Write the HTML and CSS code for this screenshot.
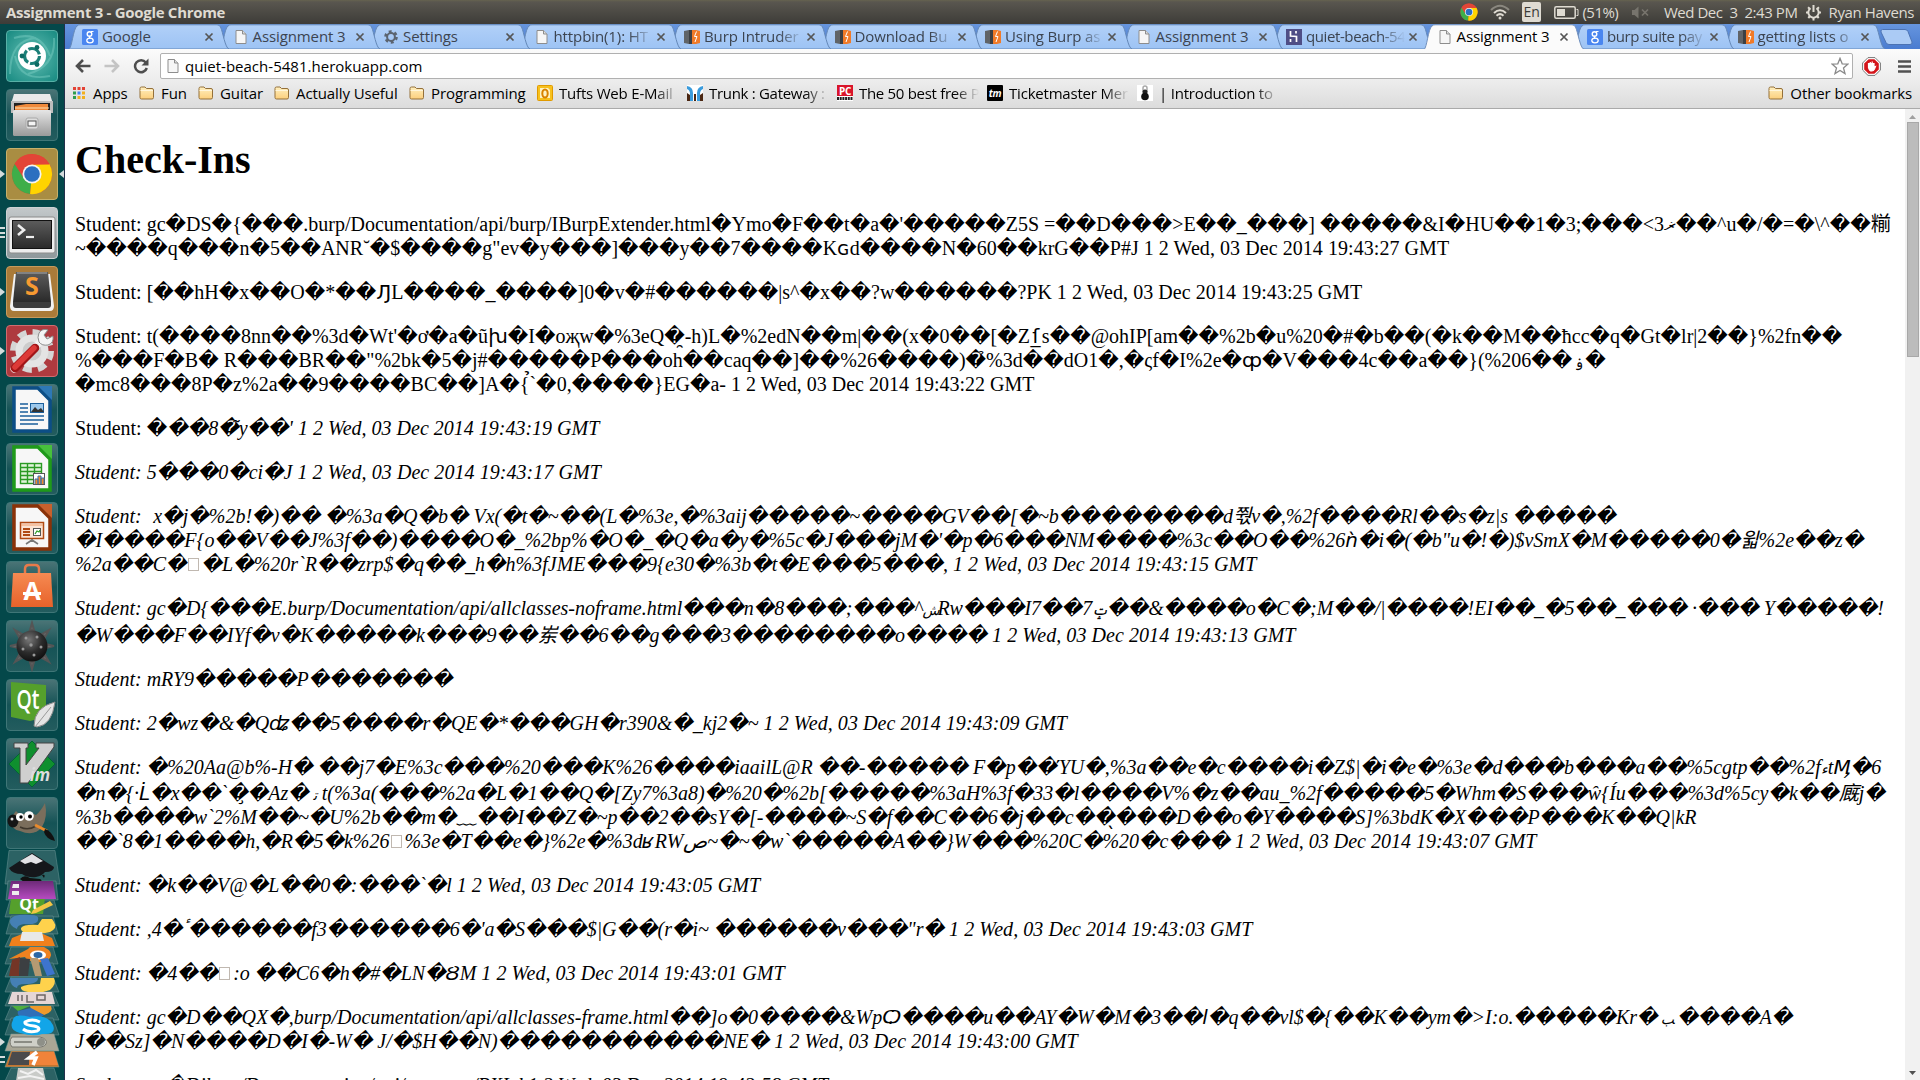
FILE: index.html
```html
<!DOCTYPE html>
<html lang="en">
<head>
<meta charset="utf-8">
<title>Assignment 3</title>
<link rel="stylesheet" href="styles.css">
</head>
<body>
<svg class="defs" width="0" height="0">
  <defs>
    <linearGradient id="gTab" x1="0" y1="0" x2="0" y2="1"><stop offset="0" stop-color="#b1d0f8"/><stop offset="1" stop-color="#9dc3f4"/></linearGradient>
    <linearGradient id="gFolder" x1="0" y1="0" x2="0" y2="1"><stop offset="0" stop-color="#fff0c0"/><stop offset="1" stop-color="#fccf7c"/></linearGradient>
    <linearGradient id="gGrey" x1="0" y1="0" x2="0" y2="1"><stop offset="0" stop-color="#e6e6e6"/><stop offset="1" stop-color="#9a9a9a"/></linearGradient>
    <linearGradient id="gDark" x1="0" y1="0" x2="0" y2="1"><stop offset="0" stop-color="#5c5c5c"/><stop offset="1" stop-color="#2a2a2a"/></linearGradient>
    <linearGradient id="gOrange" x1="0" y1="0" x2="0" y2="1"><stop offset="0" stop-color="#f58a52"/><stop offset="1" stop-color="#e8622a"/></linearGradient>
    <linearGradient id="gPurple" x1="0" y1="0" x2="0" y2="1"><stop offset="0" stop-color="#6d2a78"/><stop offset="1" stop-color="#b64bc0"/></linearGradient>
    <radialGradient id="gBall" cx=".4" cy=".3" r=".7"><stop offset="0" stop-color="#777"/><stop offset=".6" stop-color="#2b2b2b"/><stop offset="1" stop-color="#111"/></radialGradient>
  </defs>
  <symbol id="tab" viewBox="0 0 160 25" preserveAspectRatio="none"><path d="M0 25 C3 24 4 5 8 2 Q9 .8 11 .8 H148 Q150.500 .8 151.500 3 C154 8 156 24 160 25Z" fill="url(#gTab)" stroke="#6488b8"/></symbol>
  <symbol id="tabOn" viewBox="0 0 160 25" preserveAspectRatio="none"><path d="M0 25.500 C3 24 4 5 8 2 Q9 .8 11 .8 H148 Q150.500 .8 151.500 3 C154 8 156 24 160 25.500Z" fill="#fbfbfb" stroke="#6f8fbd"/></symbol>
  <symbol id="x" viewBox="0 0 10 10"><path d="M1.500 1.500 8.500 8.500M8.500 1.500 1.500 8.500" stroke="#555" stroke-width="1.700"/></symbol>
  <symbol id="doc" viewBox="0 0 16 16"><path d="M3 1.500H9.500L13 5V14.500H3Z" fill="#f6f6f6" stroke="#8d8d8d"/><path d="M9.500 1.500V5H13" fill="#ddd" stroke="#8d8d8d"/></symbol>
  <symbol id="goog" viewBox="0 0 16 16"><rect width="16" height="16" rx="1.500" fill="#4a86f0"/><circle cx="7.500" cy="5" r="2.300" fill="none" stroke="#fff" stroke-width="1.400"/><ellipse cx="8" cy="11.500" rx="3.200" ry="2.300" fill="none" stroke="#fff" stroke-width="1.300"/><path d="M9 2.500H11.500M8 7Q6.500 8.500 8.500 9.500" fill="none" stroke="#fff" stroke-width="1.200"/></symbol>
  <symbol id="burp" viewBox="0 0 16 16"><path d="M0 2 5 1V15L0 14Z" fill="#606468"/><path d="M5 1H8V15H5Z" fill="#3c4044"/><path d="M8 1H12L16 2V14L12 15H8Z" fill="#f07a28"/><path d="M12.500 2.500 10.500 7.500H13L11 13" fill="none" stroke="#fff" stroke-width="1"/></symbol>
  <symbol id="folder" viewBox="0 0 16 16"><path d="M1 3.500Q1 2 2.500 2H6L7.500 3.500H13Q14.500 3.500 14.500 5V12.500Q14.500 14 13 14H2.500Q1 14 1 12.500Z" fill="url(#gFolder)" stroke="#94703a"/><path d="M1.500 5.500H14" stroke="#fff6dc"/></symbol>
  <symbol id="heroku" viewBox="0 0 16 16"><rect width="16" height="16" fill="#4f4e86"/><path d="M4.500 2V7L10.500 7.500V13M10 2V4.500M4.500 10V13" fill="none" stroke="#fff" stroke-width="1.700"/></symbol>
  <symbol id="gear" viewBox="0 0 16 16"><circle cx="8" cy="8" r="5.200" fill="none" stroke="#5b6470" stroke-width="3.200" stroke-dasharray="2.720 2.720"/><circle cx="8" cy="8" r="3.900" fill="none" stroke="#5b6470" stroke-width="2"/></symbol>
  <symbol id="chrome" viewBox="0 0 44 44"><circle cx="22" cy="22" r="21" fill="#e8402f"/><path d="M22 22 3.800 11.500A21 21 0 0 0 20 43Z" fill="#3fae49"/><path d="M22 22 20 43A21 21 0 0 0 40.200 11.500L22 12Z" fill="#ffd400"/><path d="M3.800 11.500 13 26 22 12H40.200A21 21 0 0 0 3.800 11.500Z" fill="#e34537"/><circle cx="22" cy="22" r="10" fill="#f4f4f4"/><circle cx="22" cy="22" r="8.200" fill="#2c6fc0"/></symbol>
</svg>

<header class="panel">
  <span class="panel-title">Assignment 3 - Google Chrome</span>
  <div class="tray">
    <svg class="t-chrome" width="18" height="18"><use href="#chrome"/></svg>
    <svg class="t-wifi" width="20" height="16" viewBox="0 0 20 16" fill="none" stroke-width="2"><path d="M1 6Q10-2.500 19 6" stroke="#8a877f"/><path d="M4 9Q10 3.500 16 9" stroke="#dfdbd2"/><path d="M6.500 11.700Q10 8.500 13.500 11.700" stroke="#dfdbd2"/><circle cx="10" cy="14" r="1.500" fill="#dfdbd2"/></svg>
    <span class="lang">En</span>
    <svg class="t-batt" width="25" height="13" viewBox="0 0 25 13"><rect x=".8" y=".8" width="20.400" height="11.400" rx="1.500" fill="none" stroke="#dfdbd2" stroke-width="1.500"/><rect x="3" y="3" width="8" height="7" fill="#dfdbd2"/><path d="M22.500 3.500H24V9.500H22.500" fill="none" stroke="#dfdbd2"/></svg>
    <span class="pct">(51%)</span>
    <svg class="t-mute" width="19" height="13" viewBox="0 0 19 13"><path d="M1 4H3.500L7.500 .5V12.500L3.500 9H1Z" fill="#77746d"/><path d="M11 3.500 17 9.500M17 3.500 11 9.500" stroke="#77746d" stroke-width="1.700"/></svg>
    <span class="clock">Wed Dec&nbsp; 3&nbsp; 2:43 PM</span>
    <svg class="t-gear" width="17" height="17" viewBox="0 0 17 17"><path d="M5.500 4.200A5.200 5.200 0 1 0 11.500 4.200" fill="none" stroke="#dfdbd2" stroke-width="2"/><path d="M8.500 1V8M1 8.500H4M13 8.500H16M3 3.300 5 5M14 3.300 12 5M3.300 14 5 12M13.700 14 12 12M8.500 13V16.500" stroke="#dfdbd2" stroke-width="2"/></svg>
    <span class="user">Ryan Havens</span>
  </div>
</header>

<div class="desktop">
  <nav class="launcher">
    <div class="tile dash">
      <svg viewBox="0 0 52 52"><g fill="none" stroke="#7fd0c6" stroke-width="2" opacity=".45"><path d="M4 44Q4 10 30 8M48 8Q50 36 22 44M8 8Q34 0 44 26M44 46Q14 52 9 26"/></g><circle cx="26" cy="26" r="14" fill="#fff"/><circle cx="26" cy="26" r="7.500" fill="none" stroke="#1b7f78" stroke-width="3.200" stroke-dasharray="13.700 2"/><g fill="#0d6b64"><circle cx="16" cy="26" r="2.400"/><circle cx="31" cy="17.500" r="2.400"/><circle cx="31" cy="34.500" r="2.400"/></g></svg>
    </div>
    <div class="tile">
      <svg viewBox="0 0 52 52"><path d="M8 5H44L47 15H5Z" fill="#e9e9e9"/><rect x="5" y="12" width="42" height="12" fill="#bdbdbd"/><rect x="8" y="14" width="36" height="8" fill="#222"/><path d="M9 17 20 15H42V23H9Z" fill="#ef8a3c"/><path d="M9 19H43" stroke="#ffe0b0"/><rect x="7" y="21" width="38" height="26" rx="1.500" fill="url(#gGrey)"/><rect x="20" y="29" width="12" height="11" rx="2" fill="#ddd" stroke="#aaa"/><rect x="22" y="32" width="8" height="5" fill="#f4f4f4" stroke="#555"/></svg>
    </div>
    <div class="tile gold run focus"><svg viewBox="0 0 52 52"><use href="#chrome" x="5" y="5" width="42" height="42"/></svg></div>
    <div class="tile silver run three">
      <svg viewBox="0 0 52 52"><rect x="3" y="10" width="46" height="36" rx="2" fill="#ededed" stroke="#8b8b8b"/><rect x="6.500" y="13.500" width="39" height="28" fill="url(#gDark)" stroke="#111"/><path d="M12 18 18 23 12 28" fill="none" stroke="#eee" stroke-width="2.600"/><path d="M20 30H28" stroke="#eee" stroke-width="2.200"/></svg>
    </div>
    <div class="tile bronze run">
      <svg viewBox="0 0 52 52"><path d="M8 8H44L48 40Q48 45 44 45H8Q4 45 4 40Z" fill="#f2f2f2"/><path d="M10 6H42L45 36H7Z" fill="url(#gDark)"/><path d="M7 36H45V39Q45 42 42 42H10Q7 42 7 39Z" fill="#3c3c3c"/><path d="M11 7H41" stroke="#aaa"/><text x="26" y="29" text-anchor="middle" class="ic sub">S</text></svg>
    </div>
    <div class="tile red run">
      <svg viewBox="0 0 52 52"><circle cx="26" cy="26" r="18.500" fill="none" stroke="#d5d5d5" stroke-width="7" stroke-dasharray="8.500 6.030"/><circle cx="26" cy="26" r="13" fill="#ccc" stroke="#e4e4e4" stroke-width="7"/><path d="M8 44 36 15" stroke="#f1f1f1" stroke-width="7" stroke-linecap="round"/><path d="M33 8Q36 3 42 5L38 10 41 14 47 11Q48 18 42 20 36 21 33 17 31 12 33 8Z" fill="#f4f4f4" stroke="#8d8d8d"/><path d="M9 43 29 23" stroke="#a01517" stroke-width="8.500" stroke-linecap="round"/><path d="M9 42 28 23" stroke="#dc3a38" stroke-width="5.500" stroke-linecap="round"/></svg>
    </div>
    <div class="tile">
      <svg viewBox="0 0 52 52"><path d="M8 4H32L44 16V47H8Z" fill="#f7f7f7" stroke="#0c4e86" stroke-width="3.500"/><path d="M32 2H46V16Z" fill="#2d78b5"/><path d="M14 20H22M14 24H22M14 28H22M14 32H38M14 36H38M14 40H32" stroke="#1b5f9c" stroke-width="1.700"/><rect x="24.500" y="19.500" width="13" height="9" fill="#9cc8ec" stroke="#1b5f9c"/><path d="M25 28 29 23 32 26 35 24 38 28Z" fill="#333"/></svg>
    </div>
    <div class="tile">
      <svg viewBox="0 0 52 52"><path d="M8 4H32L44 16V47H8Z" fill="#f7f7f7" stroke="#1f9a1a" stroke-width="3.500"/><path d="M32 2H46V16Z" fill="#47c03c"/><g fill="none" stroke="#2a9a23" stroke-width="1.400"><rect x="14.500" y="20.500" width="21" height="20" fill="#dff3d8"/><path d="M14 24.500H36M14 28.500H36M14 32.500H36M14 36.500H36M21.500 20V40M28.500 20V40"/></g><rect x="27.500" y="30.500" width="11" height="11" fill="#fff" stroke="#555"/><path d="M29 41V36H32V41M32 41V33H35V41M35 41V35H38V41" fill="#f08a2a" stroke="#3a72b0"/></svg>
    </div>
    <div class="tile">
      <svg viewBox="0 0 52 52"><path d="M8 4H32L44 16V47H8Z" fill="#f7f7f7" stroke="#8a3208" stroke-width="3.500"/><path d="M32 2H46V16Z" fill="#c8602c"/><rect x="14.500" y="20.500" width="23" height="16" fill="#fbe4d4" stroke="#b04a14" stroke-width="1.500"/><path d="M17 27H24M17 30H24M17 33H24" stroke="#b04a14" stroke-width="1.800"/><path d="M15 23H37" stroke="#f0a070"/><rect x="27.500" y="26.500" width="7" height="7" fill="#fff" stroke="#555"/><path d="M29 32 31 29 33 30 34 28" fill="none" stroke="#2a9a23" stroke-width="1.200"/><path d="M26 37V38L20 42M26 38 32 42" stroke="#777" stroke-width="1.600" fill="none"/></svg>
    </div>
    <div class="tile">
      <svg viewBox="0 0 52 52"><path d="M19 14V8Q19 4 23 4H29Q33 4 33 8V14" fill="none" stroke="#e87a4a" stroke-width="2.500"/><path d="M7 12H45L47 46H5Z" fill="url(#gOrange)"/><text x="26" y="39" text-anchor="middle" class="ic usc">A</text><rect x="17" y="31" width="18" height="3" fill="#fff"/></svg>
    </div>
    <div class="tile">
      <svg viewBox="0 0 52 52"><path d="M26 3 28 10H24ZM26 49 24 42H28ZM4 26 12 24V28ZM48 26 40 24V28ZM9 10 16 14 13 17ZM43 10 36 14 39 17ZM9 42 16 38 13 35ZM43 42 36 38 39 35Z" fill="#666" stroke="#555" stroke-width="2"/><circle cx="26" cy="26" r="15.500" fill="url(#gBall)"/><g fill="#999"><circle cx="20" cy="18" r="1.500"/><circle cx="31" cy="17" r="1.500"/><circle cx="25" cy="25" r="1.700"/><circle cx="35" cy="27" r="1.500"/><circle cx="17" cy="29" r="1.500"/><circle cx="28" cy="35" r="1.500"/></g></svg>
    </div>
    <div class="tile">
      <svg viewBox="0 0 52 52"><path d="M5 3 40 6V38L24 42 5 38Z" fill="#55a02c"/><text x="22" y="30" text-anchor="middle" class="ic qt" textLength="23" lengthAdjust="spacingAndGlyphs">Qt</text><path d="M49 23Q28 28 28 47L31 48Q46 46 49 23Z" fill="#e4e4e4" stroke="#888"/><path d="M29 48 45 28" stroke="#999"/></svg>
    </div>
    <div class="tile">
      <svg viewBox="0 0 52 52"><path d="M26 3 49 26 26 49 3 26Z" fill="#0f8f2e" stroke="#063"/><path d="M8 5H22V10H20V27L33 10H30V5H48V9L22 45H14V10H8Z" fill="#cfcfcf" stroke="#444"/><text x="34" y="43" text-anchor="middle" class="ic vim">im</text></svg>
    </div>
    <div class="tile">
      <svg viewBox="0 0 52 52"><path d="M10 14 14 18Q24 14 30 18 35 14 39 6 42 20 36 30 28 40 14 34 4 32 4 22Z" fill="#7b6e5c"/><ellipse cx="7" cy="24" rx="5.500" ry="6.500" fill="#151515"/><circle cx="6" cy="22" r="1.500" fill="#ddd"/><circle cx="14" cy="20" r="4" fill="#fff"/><circle cx="23" cy="19" r="4.800" fill="#fff"/><circle cx="15" cy="20" r="1.700"/><circle cx="24" cy="19.500" r="2"/><path d="M14 30Q22 34 30 29" fill="none" stroke="#3f372c" stroke-width="1.500"/><path d="M29 28 41 34" stroke="#e98a2c" stroke-width="3"/><path d="M39 32Q46 34 49 44 40 42 38 35Z" fill="#111"/></svg>
    </div>
    <svg class="stack" viewBox="0 0 64 231" width="64" height="231">
      <g fill="#2c6264" stroke="#6f999a" stroke-opacity=".5">
        <path d="M9 .5H55L60 34H5Z"/><path d="M8 31H56L58 50H6Z"/><path d="M10 50H54L59 67H5Z"/><path d="M11 66H53L58 84H6Z"/><path d="M11 84H53L58 97H5Z"/><path d="M11 97H53L58 114H5Z"/><path d="M11 113H53L59 127H5Z"/><path d="M11 127H53L59 142H5Z"/><path d="M11 142H53L59 156H5Z"/><path d="M11 156H53L59 170H5Z"/><path d="M11 168H53L59 185H5Z"/><path d="M11 184H54L59 201H5Z" fill="#a9a695"/><path d="M11 201H54L59 217H5Z" fill="#c5762f"/><path d="M11 218H54L58 231H5Z"/>
      </g>
      <path d="M32 3 54 17Q54 22 45 22 42 26 36 27 28 28 22 24 12 24 9 18Z" fill="#15171b"/><path d="M32 4 43 11 36 14 31 12 25 14 20 11Z" fill="#e2e2e6"/><path d="M20 29Q24 24 30 28L40 29Q44 31 38 32H24ZM42 25Q46 24 44 28" fill="#111"/>
      <path d="M11 48H45L43 64H9Z" fill="#55a02c"/><text x="29" y="60" text-anchor="middle" class="ic qts">Qt</text><path d="M33 60 50 51 53 55 36 63 31 64Z" fill="#f3c544"/>
      <path d="M11 31H53L56 49H8Z" fill="url(#gPurple)"/><path d="M13 34H19V38H12ZM12 41H19V45H12Z" fill="#eee"/>
      <path d="M10 70Q12 64 30 65 40 65 38 70 38 75 24 74 17 75 17 79 9 76 10 70Z" fill="#4580b4"/><path d="M54 72Q58 78 50 82 44 84 30 83 20 83 21 78 24 74 38 75L42 69H52Z" fill="#ffd24c"/>
      <path d="M22 84H43L52 88 55 96H9L12 88Z" fill="#f0801c"/><path d="M22 82H42L44 91H20Z" fill="#e8e8e8"/>
      <path d="M9 109 28 99 30 97H44Q54 102 50 108 46 113 34 112 26 110 25 107Z" fill="#ee8220"/><ellipse cx="38" cy="105" rx="8" ry="4.500" fill="#fff"/><ellipse cx="38" cy="105" rx="4.500" ry="3" fill="#2b67a5"/>
      <path d="M12 110 20 107 19 126H9Z" fill="#743526"/><path d="M20 108 30 109 28 126H19Z" fill="#3c3f42"/><path d="M30 108 38 108 42 126H35Z" fill="#b59a72"/><path d="M40 109 48 108 55 124 47 126Z" fill="#3d74cd"/>
      <path d="M10 128H38Q38 134 25 134 17 134 17 138 10 136 10 128Z" fill="#4580b4"/><path d="M41 128H54Q57 134 50 140 40 144 28 142 20 141 21 137 26 134 40 134Z" fill="#ffd24c"/>
      <path d="M12 142H52L55 154H8Z" fill="#e5d6d6"/><path d="M18 145V151M22 145V151M27 145V152H34M37 145H45V150H37Z" stroke="#6e6666" stroke-width="1.500" fill="none"/>
      <path d="M12 156H30L18 161Z" fill="#4fae3f"/><path d="M30 156H51Q54 162 44 165L31 159Z" fill="#ef9a2b"/><path d="M18 161 31 158 44 165Q38 170 27 170 16 167 18 161Z" fill="#2f6fb8"/>
      <path d="M13 170Q14 163 30 167 48 164 53 175 57 185 42 184 34 187 20 183 8 180 13 170Z" fill="#12a5e8"/><path d="M40 172Q32 168 25 172 24 175 34 176 42 178 37 181 28 183 23 179" fill="none" stroke="#fff" stroke-width="3"/>
      <path d="M12 187H40Q48 189 46 194 44 198 34 197H12Q8 192 12 187Z" fill="#cfd0c8" stroke="#77776f"/><circle cx="41" cy="192" r="4" fill="#8e9088"/><path d="M14 192H32" stroke="#8b8c84" stroke-width="2"/>
      <path d="M12 202H30L29 215H8Z" fill="#4a4a4c"/><path d="M30 202H54L58 215H29Z" fill="#f0833a"/><path d="M37 202 29 208H36L33 215" fill="none" stroke="#fff" stroke-width="3.500"/>
      <path d="M18 218H43L46 231H16Z" fill="#c9cbc8"/><path d="M20 221 28 224 36 220 43 225M18 228 30 226 44 229" stroke="#f2f2f2" stroke-width="2" fill="none"/>
      <path d="M0 188 5 192 0 196ZM0 206H5V208H0ZM0 211H5V213H0Z" fill="#d4dcdc"/>
    </svg>
  </nav>

  <main class="browser">
    <div class="tabs">
      <div class="tab"><svg class="shape"><use href="#tab"/></svg><svg class="fav"><use href="#goog"/></svg><span>Google</span><svg class="close"><use href="#x"/></svg></div>
      <div class="tab"><svg class="shape"><use href="#tab"/></svg><svg class="fav"><use href="#doc"/></svg><span>Assignment 3</span><svg class="close"><use href="#x"/></svg></div>
      <div class="tab"><svg class="shape"><use href="#tab"/></svg><svg class="fav"><use href="#gear"/></svg><span>Settings</span><svg class="close"><use href="#x"/></svg></div>
      <div class="tab"><svg class="shape"><use href="#tab"/></svg><svg class="fav"><use href="#doc"/></svg><span class="fade">httpbin(1): HT</span><svg class="close"><use href="#x"/></svg></div>
      <div class="tab"><svg class="shape"><use href="#tab"/></svg><svg class="fav"><use href="#burp"/></svg><span class="fade">Burp Intruder</span><svg class="close"><use href="#x"/></svg></div>
      <div class="tab"><svg class="shape"><use href="#tab"/></svg><svg class="fav"><use href="#burp"/></svg><span class="fade">Download Bu</span><svg class="close"><use href="#x"/></svg></div>
      <div class="tab"><svg class="shape"><use href="#tab"/></svg><svg class="fav"><use href="#burp"/></svg><span class="fade">Using Burp as</span><svg class="close"><use href="#x"/></svg></div>
      <div class="tab"><svg class="shape"><use href="#tab"/></svg><svg class="fav"><use href="#doc"/></svg><span>Assignment 3</span><svg class="close"><use href="#x"/></svg></div>
      <div class="tab"><svg class="shape"><use href="#tab"/></svg><svg class="fav"><use href="#heroku"/></svg><span class="fade tight">quiet-beach-54</span><svg class="close"><use href="#x"/></svg></div>
      <div class="tab active"><svg class="shape"><use href="#tabOn"/></svg><svg class="fav"><use href="#doc"/></svg><span>Assignment 3</span><svg class="close"><use href="#x"/></svg></div>
      <div class="tab"><svg class="shape"><use href="#tab"/></svg><svg class="fav"><use href="#goog"/></svg><span class="fade tight">burp suite pay</span><svg class="close"><use href="#x"/></svg></div>
      <div class="tab"><svg class="shape"><use href="#tab"/></svg><svg class="fav"><use href="#burp"/></svg><span class="fade">getting lists o</span><svg class="close"><use href="#x"/></svg></div>
      <svg class="newtab" width="33" height="16" viewBox="0 0 33 16"><path d="M2.500 .5H25Q27 .5 28 2.500L32 13Q32.500 15.500 30 15.500H9Q7 15.500 6 13.500L1 3Q.5 .5 2.500 .5Z" fill="#abcbf5" stroke="#4c73b3"/></svg>
    </div>

    <div class="toolbar">
      <svg class="nav" width="16" height="14" viewBox="0 0 16 14"><path d="M8 1 2 7 8 13M2 7H15.500" fill="none" stroke="#4e4e4e" stroke-width="2.600"/></svg>
      <svg class="nav" width="16" height="14" viewBox="0 0 16 14"><path d="M8 1 14 7 8 13M14 7H.5" fill="none" stroke="#c4c4c4" stroke-width="2.600"/></svg>
      <svg class="nav" width="16" height="16" viewBox="0 0 16 16"><path d="M12.800 4.500A6 6 0 1 0 13.800 10" fill="none" stroke="#4e4e4e" stroke-width="2.500"/><path d="M15.500 .5V7.500H8.500Z" fill="#4e4e4e"/></svg>
      <div class="omnibox"><svg width="16" height="16"><use href="#doc"/></svg><span>quiet-beach-5481.herokuapp.com</span>
        <svg class="star" width="18" height="18" viewBox="0 0 18 18"><path d="M9 1.300 11.200 6.800 17 7.100 12.500 10.900 14 16.600 9 13.400 4 16.600 5.500 10.900 1 7.100 6.800 6.800Z" fill="#fff" stroke="#8a8a8a" stroke-width="1.300"/></svg></div>
      <svg class="abp" width="19" height="19" viewBox="0 0 19 19"><path d="M6 .6H13L18.400 6V13L13 18.400H6L.6 13V6Z" fill="#fff" stroke="#777"/><path d="M6.600 2.200H12.400L16.800 6.600V12.400L12.400 16.800H6.600L2.200 12.400V6.600Z" fill="#d4141a"/><path d="M6.500 6V10.500Q7.500 14 9.700 14 11.500 14 12.500 12L13.500 9.500 12 10V6M8.300 9V5M10.200 9V4.500" stroke="#fff" stroke-width="1.200" fill="#fff"/></svg>
      <svg class="menu" width="13" height="13" viewBox="0 0 13 13"><path d="M0 1.500H13M0 6.500H13M0 11.500H13" stroke="#515151" stroke-width="2.600"/></svg>
    </div>

    <div class="bookmarks">
      <a class="b1"><svg viewBox="0 0 16 16"><path d="M2 2H5V5H2ZM6.500 2H9.500V5H6.500ZM11 2H14V5H11Z" fill="#e34234"/><path d="M2 6.500H5V9.500H2Z" fill="#2e9e4f"/><path d="M6.500 6.500H9.500V9.500H6.500Z" fill="#4285f4"/><path d="M11 6.500H14V9.500H11Z" fill="#f2b01e"/><path d="M2 11H5V14H2Z" fill="#2e9e4f"/><path d="M6.500 11H9.500V14H6.500ZM11 11H14V14H11Z" fill="#f2b01e"/></svg><span>Apps</span></a>
      <a class="b2"><svg><use href="#folder"/></svg><span>Fun</span></a>
      <a class="b3"><svg><use href="#folder"/></svg><span>Guitar</span></a>
      <a class="b4"><svg><use href="#folder"/></svg><span>Actually Useful</span></a>
      <a class="b5"><svg><use href="#folder"/></svg><span>Programming</span></a>
      <a class="b6"><svg viewBox="0 0 16 16"><rect x=".5" y=".5" width="15" height="15" rx="1" fill="#f7c11e" stroke="#e09a00"/><path d="M3 3H11L13 5V13H3Z" fill="#fff3c4"/><ellipse cx="8" cy="8.500" rx="2.700" ry="4" fill="none" stroke="#d98200" stroke-width="2"/></svg><span class="fade">Tufts Web E-Mail</span></a>
      <a class="b7"><svg viewBox="0 0 16 16"><rect width="16" height="16" fill="#fff"/><path d="M0 1Q6 2 6 8V16H3V9Q3 5 0 4ZM16 1Q10 2 10 8V16H13V9Q13 5 16 4Z" fill="#3a9bdc"/><path d="M0 8 3 10V16H0ZM16 8 13 10V16H16ZM7 9H9V16H7Z" fill="#4b2713"/></svg><span class="fade">Trunk : Gateway :</span></a>
      <a class="b8"><svg viewBox="0 0 16 16"><rect width="16" height="16" fill="#fff"/><rect width="16" height="11" fill="#d9142a"/><text x="8" y="9.500" text-anchor="middle" class="ic pc">PC</text><path d="M0 13.500H16" stroke="#222" stroke-width="3" stroke-dasharray="2 .7"/></svg><span class="fade">The 50 best free P</span></a>
      <a class="b9"><svg viewBox="0 0 16 16"><rect width="16" height="16" rx="1" fill="#000"/><text x="8" y="12" text-anchor="middle" class="ic tm">tm</text></svg><span class="fade">Ticketmaster Mer</span></a>
      <a class="b10"><svg viewBox="0 0 16 16"><rect width="16" height="16" fill="#fff"/><path d="M6 7V3Q6 1 8 1 10 1 10 3V7" fill="none" stroke="#aaa" stroke-width="1.500"/><circle cx="8" cy="7" r="2.500" fill="#222"/><circle cx="8" cy="11.500" r="3.800" fill="#111"/></svg><span class="fade">| Introduction to</span></a>
      <a class="other"><svg><use href="#folder"/></svg><span>Other bookmarks</span></a>
    </div>

    <div class="viewport">
      <article class="page">
        <h1>Check-Ins</h1>
        <p><span>Student: gc�DS�{���.burp/Documentation/api/burp/IBurpExtender.html�Ymo�F��t�a�'�����Z5S =��D���&gt;E��_���] �����&amp;I�HU��1�3;���&lt;3ޜ��^u�/�=�\^��糋</span>
          <span>~����q���n�5��ANR˘�$����g"ev�y���]���y��7����K<b class="dv">ɢ</b>d����N�60��krG��P#J <time class="wide">1 2 Wed, 03 Dec 2014 19:43:27 GMT</time></span></p>
        <p><span>Student: [��hH�x��O�*��<b class="dv">Ԓ</b>L����_����]0�v�#������|s^�x��?w������?PK <time>1 2 Wed, 03 Dec 2014 19:43:25 GMT</time></span></p>
        <p><span>Student: t(����8nn��%3d�Wt'�ơ�a�ũ<b class="dv">խ</b>�I�oҗw�%3eQ�̯-h)L�%2edN��m|��(x�0��[�Z<b class="dv w12">ſ̲</b>s��@ohIP[am��%2b�u%20�#�b��(�k��M��ħcc�q�Gt�lr|2��}%2fn��</span>
          <span>%���F�B� R���BR��"%2bk�5�j#�����P���oh��caq��]��%26����)�̉%3d��dO1�,�ςf�I%2e�<b class="dv">ȹ</b>�V���4c��a��}(%206��<b class="ar w13">ۏ</b>�</span>
          <span>�mc8���8P�z%2a��9����BC��]A�{̉`�0,����}EG�a- 1 2 Wed, 03 Dec 2014 19:43:22 GMT</span></p>
        <p><span>Student: �<i>��8�̃y��' 1 2 Wed, 03 Dec 2014 19:43:19 GMT</i></span></p>
        <div class="it">
        <p><span>Student: 5���0�ci�J <time>1 2 Wed, 03 Dec 2014 19:43:17 GMT</time></span></p>
        <p><span>Student: <b class="low">ˏ</b>x�j�%2b!�)�� �%3a�Q�b� Vx(�t�~��(L�%3e,�%3aij�����~����GV��[�~b��������d쭧v�,%2f����Rl��s�z|s �����</span>
          <span>�I����F{o��V��J%3f��)����O�_%2bp%�O�_�Q�a�y�%5c�J���jM�'�p�6���NM����%3c��O��%26<b class="dv">ǹ</b>�i�(�b"u�!�)$vSmX�M�����0�윏%2e��z�</span>
          <span>%2a��C�<b class="tofu"></b>�L�%20r`R��zrp$�q��_h�h%3fJME���9{e30�%3b�t�E���5���, <time>1 2 Wed, 03 Dec 2014 19:43:15 GMT</time></span></p>
        <p><span>Student: gc�D{���E.burp/Documentation/api/allclasses-noframe.html���n�8���;���^<b class="ar w15">ش</b>Rw���I7��7<b class="ar w15">ݓ</b>��&amp;����o�C�;M��/|����!EI��_�5��_��� ·��� Y�����!</span>
          <span class="tall3">�W���F��IYf�v�K�����k���9��岽��6��g���3��������o���� <time>1 2 Wed, 03 Dec 2014 19:43:13 GMT</time></span></p>
        <p><span>Student: mRY9�����P�������</span></p>
        <p><span>Student: 2�wz�&amp;�Q<b class="dv">ʥ</b>��5����r�QE�*���GH�r390&amp;�_kj2�~ <time>1 2 Wed, 03 Dec 2014 19:43:09 GMT</time></span></p>
        <p><span>Student: �%20Aa@b%-H� ��j7�E%3c���%20���K%26����iaailL@R ��-����� F�p��ΎU�,%3a��e�c����i�Z$|�i�e�%3e�d���b���a��%5cgtp��%2f<b class="ar w7">ء</b>t<b class="dv">Ӎ</b>�6</span>
          <span class="tall2">�n�{·<b class="dv">L̇</b>�x��`�̧�Az�<b class="ar w13">ﺗ</b>t(%3a(���%2a�L�1��Q�[Zy7%3a8)�%20�%2b[�����%3aH%3f�33�l����V%�z��au_%2f�����5�Whm�S���ŵ{Íu���%3d%5cy�k��廐j�</span>
          <span>%3b����w`2%M��~�U%2b��m�﹏��I��Z�~p��2��sY�[-����~S�f��C��6�j��c��̖���D��o�Y����S]%3bdK�X���P���K��Q|kR</span>
          <span>��`8�1����h,�R�5�k%26<b class="tofu"></b>%3e�T��e�}%2e�%3d<b class="dv">ʁ</b>RWص~�~�w`�����A��}W���%20C�%20�c��� 1 2 Wed, 03 Dec 2014 19:43:07 GMT</span></p>
        <p><span>Student: �k��V@�L��0�:���`�l <time>1 2 Wed, 03 Dec 2014 19:43:05 GMT</time></span></p>
        <p><span>Student: ,4�ٴ������f3������6�'a�S���$|G��(r�i~ ������v���"r� <time>1 2 Wed, 03 Dec 2014 19:43:03 GMT</time></span></p>
        <p><span>Student: �4��<b class="tofu"></b>:o ��C6�h�#�LN�<b class="dv">Ȣ</b>M <time>1 2 Wed, 03 Dec 2014 19:43:01 GMT</time></span></p>
        <p><span>Student: gc�D��QX�,burp/Documentation/api/allclasses-frame.html��]o�0����&amp;Wp<b class="dv w19">Ѻ</b>����u��AY�W�M�3��<b class="dv">ӏ</b>�q��vl$�{��K��ym�&gt;I:o.�����Kr�<b class="ar w20">ﺐ</b>����A�</span>
          <span>J��Sz]�N����D�I�-W� J/�$H��N)�����������NE� <time>1 2 Wed, 03 Dec 2014 19:43:00 GMT</time></span></p>
        <p class="last"><span>Student: gc�Dibmp/Documentation/api/compact/BXIel 1 2 Wed, 03 Dec 2014 19:42:58 GMT</span></p>
        </div>
      </article>
      <div class="scrollbar">
        <svg width="15" height="13" viewBox="0 0 15 13"><path d="M4 10 7.500 6 11 10Z" fill="#a0a0a0"/></svg>
        <div class="thumb"></div>
        <svg class="down" width="15" height="15" viewBox="0 0 15 15"><path d="M4 6 7.500 10 11 6Z" fill="#505050"/></svg>
      </div>
    </div>
  </main>
</div>
</body>
</html>
```
FILE: styles.css
```css
* { box-sizing: border-box; }
body { margin: 0; width: 1920px; height: 1080px; overflow: hidden; display: flex; flex-direction: column; font-family: "Open Sans", sans-serif; font-size: 15px; color: #000; background: #fff; }
svg { display: block; flex: none; }
.defs { position: absolute; }
.ic { font-family: "Open Sans", sans-serif; font-weight: 700; fill: #fff; }
.sub { font-size: 25px; fill: #f79a31; }
.usc { font-size: 25px; }
.qt { font-size: 27px; font-weight: 600; }
.qts { font-size: 16px; }
.vim { font-size: 17px; font-style: italic; fill: #ddd; }
.pc { font-size: 10px; }
.tm { font-size: 10px; font-style: italic; }

.panel { height: 24px; flex: none; display: flex; justify-content: space-between; align-items: center; padding: 0 6px; background: linear-gradient(#66634f 0, #59564f 2px, #3d3c38 100%); color: #dfdbd2; line-height: 22px; white-space: nowrap; }
.panel-title { font-weight: 700; letter-spacing: -0.3px; }
.panel-title, .pct, .clock, .user { margin-top: -1px; }
.tray { display: flex; align-items: center; width: 454px; }
.t-wifi { margin-left: 12px; }
.lang { width: 20px; height: 20px; margin-left: 12px; border-radius: 2px; background: #dfdbd2; color: #3c3b37; line-height: 20px; text-align: center; font-size: 14px; }
.t-batt { margin-left: 13px; }
.pct { width: 50px; margin-left: 3px; letter-spacing: -0.5px; }
.clock { width: 145px; margin-left: 14px; letter-spacing: -0.45px; }
.user { margin-left: 7px; letter-spacing: -0.4px; }

.desktop { flex: 1; display: flex; min-height: 0; }
.launcher { width: 65px; flex: none; display: flex; flex-direction: column; padding-top: 6px; background: #04484a; border-right: 1px solid #23304a; overflow: hidden; }
.tile { position: relative; flex: none; width: 52px; height: 52px; margin: 0 0 7px 6px; border-radius: 4px; border: 1px solid #3f7677; background: linear-gradient(#4a7476, #155356 50%, #235c5e); }
.tile svg { width: 52px; height: 52px; margin: -1px; }
.tile:nth-child(14) { margin-bottom: 1px; }
.dash { background: radial-gradient(#65bfb4, #178a81); border-color: #58b0a6; }
.gold { background: #a98d42; border-color: #c5b06c; }
.silver { background: linear-gradient(#c3c8ca, #8e989b); border-color: #cdd2d4; }
.bronze { background: #aa7b39; border-color: #c79a5c; }
.red { background: #ae3a3f; border-color: #cf6c70; }
.run::before { content: ""; position: absolute; left: -7px; top: 21px; border: 4.500px solid transparent; border-left: 5px solid #d4dcdc; border-right: 0; }
.three::before { height: 12px; width: 5px; top: 19px; border: 0; background: repeating-linear-gradient(#d4dcdc 0 2px, transparent 2px 4.500px); }
.focus::after { content: ""; position: absolute; right: -7px; top: 21px; border: 4.500px solid transparent; border-right: 5px solid #d4dcdc; border-left: 0; }

.browser { flex: 1; min-width: 0; display: flex; flex-direction: column; }
.tabs { height: 25px; flex: none; display: flex; padding-left: 4px; background: linear-gradient(#6695de, #4a7cd0); color: #3c4450; }
.tab { position: relative; width: 160px; height: 25px; flex: none; margin-right: -9.500px; display: flex; align-items: center; padding-left: 13px; z-index: 1; }
.tab:nth-child(1) { z-index: 12; } .tab:nth-child(2) { z-index: 11; } .tab:nth-child(3) { z-index: 10; } .tab:nth-child(4) { z-index: 9; } .tab:nth-child(5) { z-index: 8; } .tab:nth-child(6) { z-index: 7; } .tab:nth-child(7) { z-index: 6; } .tab:nth-child(8) { z-index: 5; } .tab:nth-child(9) { z-index: 4; } .tab:nth-child(11) { z-index: 3; } .tab:nth-child(12) { z-index: 2; }
.tab.active { z-index: 20; color: #000; }
.shape { position: absolute; left: 0; top: 0; width: 160px; height: 25px; z-index: -1; }
.fav { width: 16px; height: 16px; }
.tab span { width: 101px; margin-left: 4px; margin-top: -1px; white-space: nowrap; letter-spacing: -0.1px; line-height: 22px; }
.tab .tight { letter-spacing: -0.4px; }
.fade { -webkit-mask-image: linear-gradient(90deg, #000 calc(100% - 24px), transparent); mask-image: linear-gradient(90deg, #000 calc(100% - 24px), transparent); }
.tab .fade { width: 99px; margin-right: 2px; }
.close { width: 10px; height: 10px; margin-left: 1px; }
.newtab { margin: 5px 0 0 14px; margin-left: 5px; }

.toolbar { height: 31px; flex: none; display: flex; align-items: center; padding: 4px 9px 1px 10px; background: linear-gradient(#fbfbfb, #ededed); }
.nav { margin-right: 13px; }
.omnibox { flex: 1; height: 26px; margin-left: -2px; display: flex; align-items: center; padding: 0 3px 0 4px; border: 1px solid #b0b0b0; border-radius: 2px; background: #fff; }
.omnibox span { flex: 1; margin-left: 4px; line-height: 24px; letter-spacing: 0.02px; }
.abp { margin-left: 9px; }
.menu { margin-left: 17px; }

.bookmarks { position: relative; height: 29px; flex: none; display: flex; align-items: center; padding: 0 8px 2px 6px; border-bottom: 1px solid #aaa; background: linear-gradient(#ededed, #dcdcdc); letter-spacing: -0.1px; }
.bookmarks a { display: flex; align-items: center; flex: none; white-space: nowrap; line-height: 26px; }
.bookmarks svg { width: 16px; height: 16px; margin-right: 6px; }
.bookmarks .fade { width: 120px; }
.b1 { width: 68px; } .b2 { width: 59px; } .b3 { width: 76px; } .b4 { width: 135px; letter-spacing: -0.1px; } .b5 { width: 128px; letter-spacing: -0.1px; } .b6, .b7, .b8, .b9, .b10 { width: 150px; letter-spacing: -0.2px; }
.bookmarks .b7, .bookmarks .b8 { letter-spacing: -0.3px; }
.bookmarks .other { margin-left: auto; letter-spacing: -0.1px; }

.viewport { flex: 1; min-height: 0; display: flex; overflow: hidden; }
.page { flex: 1; min-width: 0; overflow: hidden; padding: 0 10px; font: 20px/24px "Liberation Serif", "DejaVu Sans", "Noto Sans CJK SC", serif; white-space: nowrap; }
.page h1 { margin: 28px 0 29px; font-size: 40px; line-height: 46px; font-weight: 700; }
.page p { margin: 0 0 20px; }
.page p > span { display: block; direction: ltr; unicode-bidi: bidi-override; }
.page b { font-weight: 400; }
.page .dv, .page .ar { font-family: "DejaVu Sans", sans-serif; font-size: 20px; line-height: 0; }
.page .ar { font-size: 14px; }
.page .low { position: relative; top: 10px; }
.w7, .w12, .w13, .w15, .w19, .w20 { display: inline-block; text-align: center; }
.w7 { width: 7px; } .w12 { width: 12px; } .w13 { width: 13px; } .w15 { width: 15px; } .w19 { width: 19px; } .w20 { width: 20px; }
.page time { letter-spacing: 0.06px; }
.last { letter-spacing: -0.04px; }
.it { font-style: italic; }
.page .tall3 { padding-top: 3px; }
.page .tall2 { padding-top: 2px; }
.tofu { display: inline-block; width: 11px; height: 13px; margin: 0 3px 0 1px; border: 1px solid #c0b8b0; }

.scrollbar { width: 15px; flex: none; display: flex; flex-direction: column; background: #f1f1f1; }
.thumb { height: 235px; margin: 0 1px 0 2px; background: #bcbcbc; border: 1px solid #a8a8a8; }
.down { margin-top: auto; }
```
